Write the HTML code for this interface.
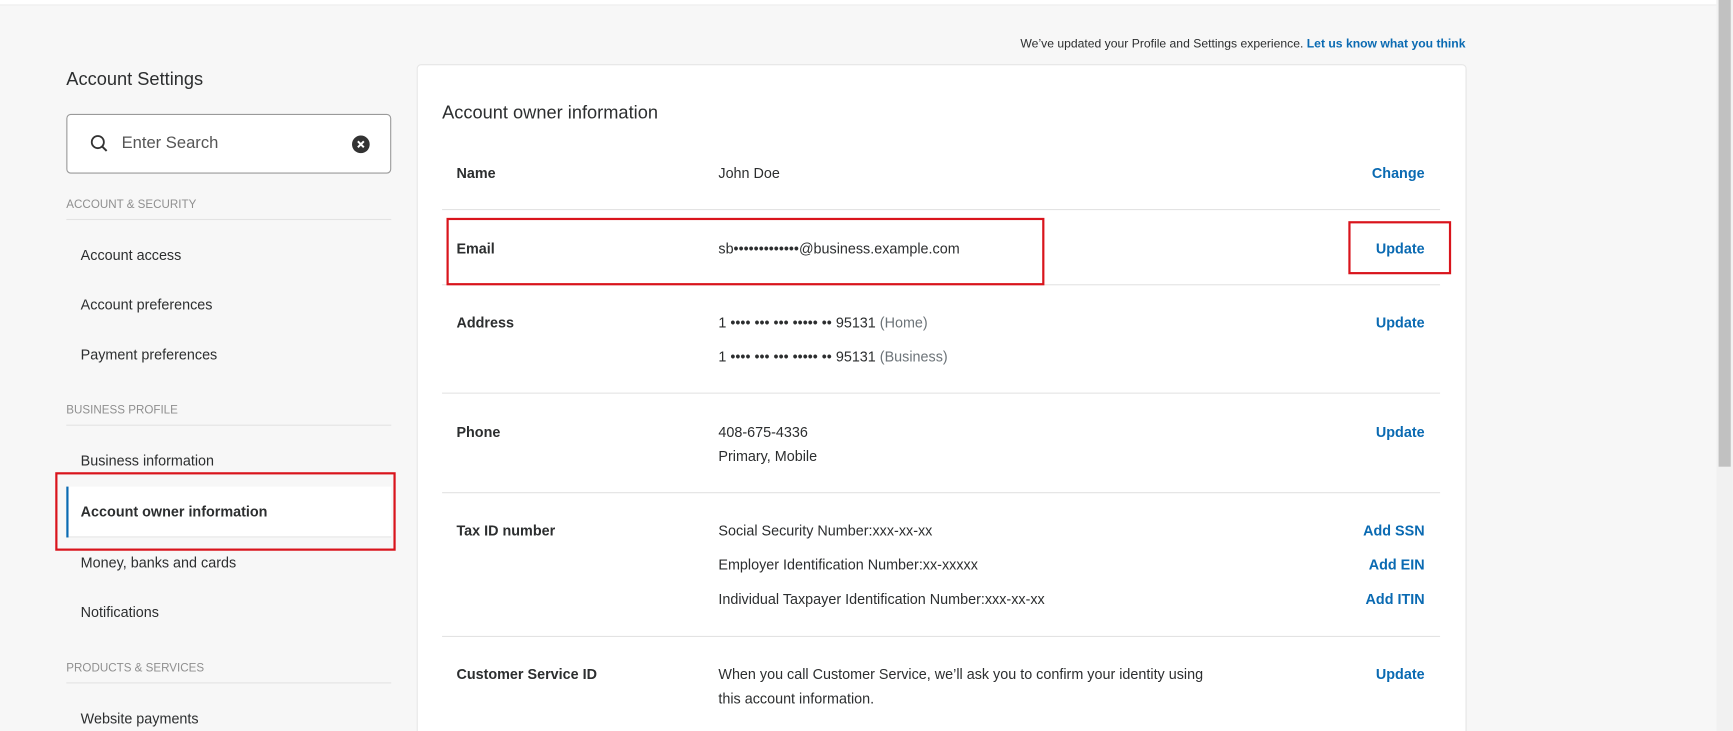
<!DOCTYPE html>
<html><head><meta charset="utf-8"><style>
html,body{margin:0;padding:0;width:1733px;height:731px;overflow:hidden;background:#f7f7f7;}
#clip{position:relative;width:1733px;height:731px;overflow:hidden;}
#w{position:absolute;left:0;top:0;width:1568px;height:661px;overflow:hidden;transform:scale(1.1052,1.1059);transform-origin:0 0;font-family:"Liberation Sans",sans-serif;color:#2c2e2f;}
.a{position:absolute;white-space:nowrap;line-height:1;}
.t{font-size:13px;}
.sec{font-size:10.5px;color:#8f8f8f;}
.ln{position:absolute;height:1px;background:#e3e3e3;}
.lb{font-weight:bold;font-size:13px;}
.ac{font-weight:bold;font-size:13px;color:#0a6ab2;text-align:right;right:279px;}
.g{color:#6c7378;}
.red{position:absolute;border:2px solid #d9141c;box-sizing:border-box;}
</style></head><body><div id="clip"><div id="w">
<div style="position:absolute;left:0;top:0;width:1553px;height:4px;background:#fff;border-bottom:1px solid #ececec"></div>
<div style="position:absolute;left:1553px;top:0;width:15px;height:661px;background:#f1f1f1"></div>
<div style="position:absolute;left:1555px;top:0;width:11px;height:422px;background:#c1c1c1"></div>
<div class="a" style="right:242px;top:35px;font-size:11px">We’ve updated your Profile and Settings experience. <b style="color:#0a6ab2">Let us know what you think</b></div>
<div class="a" style="left:60px;top:64px;font-size:16.5px">Account Settings</div>
<div style="position:absolute;left:60px;top:103px;width:294px;height:54px;box-sizing:border-box;border:1px solid #9a9a9a;border-radius:4px;background:#fff"></div>
<svg style="position:absolute;left:81px;top:121px" width="18" height="18" viewBox="0 0 18 18"><circle cx="7.5" cy="7.5" r="5.5" fill="none" stroke="#333" stroke-width="1.6"/><path d="M11.5 11.5L15.5 15.5" stroke="#333" stroke-width="1.8"/></svg>
<div class="a" style="left:110px;top:122px;font-size:15px;color:#555">Enter Search</div>
<svg style="position:absolute;left:318px;top:122px" width="17" height="17" viewBox="0 0 17 17"><circle cx="8.5" cy="8.5" r="8" fill="#333"/><path d="M5.8 5.8L11.2 11.2M11.2 5.8L5.8 11.2" stroke="#fff" stroke-width="1.8"/></svg>
<div class="a sec" style="left:60px;top:180px">ACCOUNT &amp; SECURITY</div>
<div class="ln" style="left:60px;top:198px;width:294px"></div>
<div class="a t" style="left:73px;top:224px">Account access</div>
<div class="a t" style="left:73px;top:269px">Account preferences</div>
<div class="a t" style="left:73px;top:314px">Payment preferences</div>
<div class="a sec" style="left:60px;top:366px">BUSINESS PROFILE</div>
<div class="ln" style="left:60px;top:384px;width:294px"></div>
<div class="a t" style="left:73px;top:410px">Business information</div>
<div style="position:absolute;left:60px;top:440px;width:294px;height:46px;background:#fff;border-bottom:1px solid #e6e6e6;box-sizing:border-box"></div>
<div style="position:absolute;left:60px;top:440px;width:2px;height:46px;background:#0a6ab2"></div>
<div class="a t" style="left:73px;top:456px;font-weight:bold">Account owner information</div>
<div class="red" style="left:50px;top:427px;width:308px;height:71px"></div>
<div class="a t" style="left:73px;top:502px">Money, banks and cards</div>
<div class="a t" style="left:73px;top:547px">Notifications</div>
<div class="a sec" style="left:60px;top:599px">PRODUCTS &amp; SERVICES</div>
<div class="ln" style="left:60px;top:617px;width:294px"></div>
<div class="a t" style="left:73px;top:643px">Website payments</div>

<div style="position:absolute;left:377px;top:58px;width:950px;height:620px;background:#fff;border:1px solid #e6e6e6;border-radius:4px;box-sizing:border-box"></div>
<div class="a" style="left:400px;top:94px;font-size:16.5px">Account owner information</div>

<div class="a lb" style="left:413px;top:150px">Name</div>
<div class="a t" style="left:650px;top:150px">John Doe</div>
<div class="a ac" style="top:150px">Change</div>
<div class="ln" style="left:400px;top:189px;width:903px"></div>

<div class="a lb" style="left:413px;top:218px">Email</div>
<div class="a t" style="left:650px;top:218px">sb•••••••••••••@business.example.com</div>
<div class="a ac" style="top:218px">Update</div>
<div class="ln" style="left:400px;top:257px;width:903px"></div>
<div class="red" style="left:404px;top:197px;width:541px;height:61px"></div>
<div class="red" style="left:1220px;top:200px;width:93px;height:48px"></div>

<div class="a lb" style="left:413px;top:285px">Address</div>
<div class="a t" style="left:650px;top:285px">1 •••• ••• ••• ••••• •• 95131 <span class="g">(Home)</span></div>
<div class="a t" style="left:650px;top:316px">1 •••• ••• ••• ••••• •• 95131 <span class="g">(Business)</span></div>
<div class="a ac" style="top:285px">Update</div>
<div class="ln" style="left:400px;top:355px;width:903px"></div>

<div class="a lb" style="left:413px;top:384px">Phone</div>
<div class="a t" style="left:650px;top:384px">408-675-4336</div>
<div class="a t" style="left:650px;top:406px">Primary, Mobile</div>
<div class="a ac" style="top:384px">Update</div>
<div class="ln" style="left:400px;top:445px;width:903px"></div>

<div class="a lb" style="left:413px;top:473px">Tax ID number</div>
<div class="a t" style="left:650px;top:473px">Social Security Number:xxx-xx-xx</div>
<div class="a t" style="left:650px;top:504px">Employer Identification Number:xx-xxxxx</div>
<div class="a t" style="left:650px;top:535px">Individual Taxpayer Identification Number:xxx-xx-xx</div>
<div class="a ac" style="top:473px">Add SSN</div>
<div class="a ac" style="top:504px">Add EIN</div>
<div class="a ac" style="top:535px">Add ITIN</div>
<div class="ln" style="left:400px;top:575px;width:903px"></div>

<div class="a lb" style="left:413px;top:603px">Customer Service ID</div>
<div class="a t" style="left:650px;top:603px">When you call Customer Service, we’ll ask you to confirm your identity using</div>
<div class="a t" style="left:650px;top:625px">this account information.</div>
<div class="a ac" style="top:603px">Update</div>
</div></div></body></html>
